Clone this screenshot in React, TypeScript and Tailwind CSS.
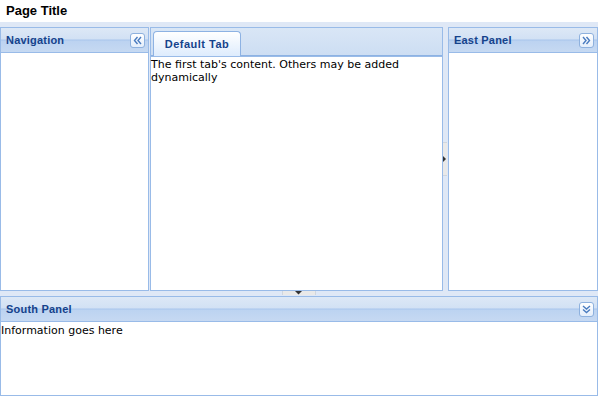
function ToolButton({ dir }: { dir: "left" | "right" | "down" }) {
  const paths = {
    left: "M7.5 4 L4.5 7.5 L7.5 11 M11 4 L8 7.5 L11 11",
    right: "M4 4 L7 7.5 L4 11 M7.5 4 L10.5 7.5 L7.5 11",
    down: "M4 4 L7.5 7 L11 4 M4 7.5 L7.5 10.5 L11 7.5",
  };
  return (
    <div className="w-[15px] h-[15px] rounded-[3px] border border-[#8eb1de] bg-[linear-gradient(to_bottom,#ffffff,#e4eefb)] flex items-center justify-center">
      <svg width="15" height="15" viewBox="0 0 15 15" className="-m-px">
        <path d={paths[dir]} fill="none" stroke="#4a7cc0" strokeWidth="1.4" />
      </svg>
    </div>
  );
}

function PanelHeader({ title, dir }: { title: string; dir: "left" | "right" | "down" }) {
  return (
    <div className="h-[25px] border-b border-[#99bbe8] bg-[linear-gradient(to_bottom,#dde8f6_0%,#d2e1f4_46%,#a7c4ec_50%,#bcd3f1_54%,#c6d9f2_100%)] flex items-center justify-between pl-[5px] pr-[3px]">
      <span className="font-['Liberation_Sans',Arial,sans-serif] font-bold text-[11px] text-[#15428b] tracking-[0.2px]">
        {title}
      </span>
      <ToolButton dir={dir} />
    </div>
  );
}

export default function App() {
  return (
    <div className="w-[598px] h-[396px] flex flex-col bg-white overflow-hidden font-['DejaVu_Sans',Verdana,sans-serif] text-[11px] text-black">
      <div className="h-[22px] pl-[6px] flex items-center font-['Liberation_Sans',Arial,sans-serif] font-bold text-[13px]">
        Page Title
      </div>

      <div className="flex-1 bg-[#dfe8f6] pt-[5px] flex flex-col">
        <div className="h-[264px] flex">
          {/* west */}
          <div className="w-[149px] border border-[#99bbe8] bg-white flex flex-col">
            <PanelHeader title="Navigation" dir="left" />
            <div className="flex-1" />
          </div>

          <div className="w-px" />

          {/* center */}
          <div className="w-[293px] border border-[#99bbe8] bg-white flex flex-col">
            <div className="h-[28px] bg-[linear-gradient(to_bottom,#d9e6f6,#cddef3)] border-b border-[#8db2e3] flex items-end pl-[2px]">
              <div className="w-[88px] h-[25px] -mb-px rounded-t-[4px] border border-b-0 border-[#8db2e3] bg-[linear-gradient(to_bottom,#ffffff,#deecfd)] flex items-center justify-center">
                <span className="font-['Liberation_Sans',Arial,sans-serif] font-bold text-[11px] text-[#15428b] tracking-[0.5px]">
                  Default Tab
                </span>
              </div>
            </div>
            <div className="flex-1 border-t border-[#99bbe8] leading-[13px] pt-[1px]">
              The first tab's content. Others may be added dynamically
            </div>
          </div>

          {/* east splitter */}
          <div className="w-[5px] flex items-center">
            <div className="w-[4px] h-[34px] bg-[#e9e9e9] border-y border-[#cfd6df] flex items-center justify-center">
              <svg width="4" height="6" viewBox="0 0 4 6">
                <path d="M0 0 L3 3 L0 6 Z" fill="#333" />
              </svg>
            </div>
          </div>

          {/* east */}
          <div className="w-[150px] border border-[#99bbe8] bg-white flex flex-col">
            <PanelHeader title="East Panel" dir="right" />
            <div className="flex-1" />
          </div>
        </div>

        {/* south splitter */}
        <div className="h-[5px] flex justify-center">
          <div className="w-[34px] h-[4px] -ml-[1px] bg-[#e9e9e9] border-x border-[#cfd6df] flex items-center justify-center">
            <svg width="7" height="4" viewBox="0 0 7 4">
              <path d="M0 0 L7 0 L3.5 3.5 Z" fill="#333" />
            </svg>
          </div>
        </div>

        {/* south */}
        <div className="flex-1 border border-[#99bbe8] bg-white flex flex-col">
          <PanelHeader title="South Panel" dir="down" />
          <div className="flex-1 pt-[2px] leading-[13px]">Information goes here</div>
        </div>
      </div>
    </div>
  );
}
